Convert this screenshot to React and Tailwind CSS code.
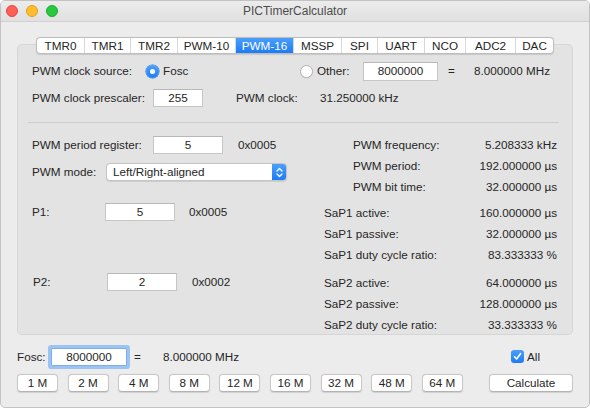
import { useState } from 'react'

const tabs = [
  ['TMR0', 'w-[47px]'],
  ['TMR1', 'w-[46px]'],
  ['TMR2', 'w-[47px]'],
  ['PWM-10', 'w-[58px]'],
  ['PWM-16', 'w-[58px]'],
  ['MSSP', 'w-[48px]'],
  ['SPI', 'w-[36px]'],
  ['UART', 'w-[47px]'],
  ['NCO', 'w-[41px]'],
  ['ADC2', 'w-[50px]'],
  ['DAC', 'w-[38px]'],
]

const presets = ['1 M', '2 M', '4 M', '8 M', '12 M', '16 M', '32 M', '48 M', '64 M']

function Field({ value, className }) {
  return (
    <div
      className={`flex h-[18px] items-center justify-center border border-[#c6c6c6] border-t-[#b8b8b8] bg-white ${className}`}
    >
      {value}
    </div>
  )
}

function Radio({ checked }) {
  return checked ? (
    <span className="flex h-[13px] w-[13px] items-center justify-center rounded-full bg-linear-to-b from-[#4aa1fb] to-[#1d7ff5] shadow-[0_0_0_0.5px_#1b6fd8]">
      <span className="h-[5px] w-[5px] rounded-full bg-white" />
    </span>
  ) : (
    <span className="h-[13px] w-[13px] rounded-full border border-[#b4b4b4] bg-white shadow-[0_0.5px_1px_rgba(0,0,0,0.1)]" />
  )
}

function Stat({ label, value, indent }) {
  return (
    <div className="flex h-[20px] items-center">
      <span className={indent ? 'pl-[29px]' : ''}>{label}</span>
      <span className="ml-auto">{value}</span>
    </div>
  )
}

function Btn({ children, className }) {
  return (
    <button className={`flex h-[18px] items-center justify-center rounded-[4px] border border-[#c8c8c8] border-b-[#b3b3b3] bg-white shadow-[0_0.5px_1px_rgba(0,0,0,0.12)] ${className}`}>
      {children}
    </button>
  )
}

export default function App() {
  const [tab, setTab] = useState('PWM-16')
  const [all, setAll] = useState(true)

  return (
    <div className="h-[408px] w-[590px] bg-white font-['Liberation_Sans',Arial,sans-serif] text-[11.7px] text-[#262626]">
      <div className="flex h-full flex-col overflow-hidden rounded-[5px] border border-[#c2c2c2] bg-[#ececec]">
        {/* title bar */}
        <div className="relative flex h-[21px] shrink-0 items-center justify-center border-b border-[#d0d0d0] bg-linear-to-b from-[#ececec] to-[#e0e0e0]">
          <div className="absolute left-[5px] top-[4px] flex gap-[8px]">
            <span className="h-[12px] w-[12px] rounded-full border border-[#e2463f] bg-[#fe5f57]" />
            <span className="h-[12px] w-[12px] rounded-full border border-[#e1a116] bg-[#febc2e]" />
            <span className="h-[12px] w-[12px] rounded-full border border-[#1aab29] bg-[#28c840]" />
          </div>
          <span className="text-[12px] text-[#4d4d4d]">PICTimerCalculator</span>
        </div>

        {/* tabs */}
        <div className="relative z-10 flex justify-center pt-[15px]">
          <div className="flex h-[17px] overflow-hidden rounded-[4px] border border-[#bdbdbd] bg-white shadow-[0_0.5px_1px_rgba(0,0,0,0.12)]">
            {tabs.map(([name, w], i) => (
              <button
                key={name}
                onClick={() => setTab(name)}
                className={`flex h-full items-center justify-center ${w} ${i > 0 ? 'border-l border-[#d8d8d8]' : ''} ${
                  tab === name ? 'bg-linear-to-b from-[#4b9ffa] to-[#1a7cf5] text-white' : ''
                }`}
              >
                {name}
              </button>
            ))}
          </div>
        </div>

        {/* group box */}
        <div className="mx-[16px] -mt-[10px] h-[291px] shrink-0 rounded-[5px] border border-[#d6d6d6] bg-[#e3e3e3] pt-[15px]">
          <div className="flex h-[22px] items-center pl-[14px]">
            <span className="w-[114px]">PWM clock source:</span>
            <Radio checked />
            <span className="ml-[4px] w-[137px]">Fosc</span>
            <Radio />
            <span className="ml-[4px] w-[46px]">Other:</span>
            <Field value="8000000" className="h-[19px] w-[75px]" />
            <span className="w-[36px] pl-[10px]">=</span>
            <span>8.000000 MHz</span>
          </div>

          <div className="mt-[5px] flex h-[22px] items-center pl-[14px]">
            <span className="w-[121px]">PWM clock prescaler:</span>
            <Field value="255" className="w-[50px]" />
            <span className="ml-[33px] w-[84px]">PWM clock:</span>
            <span>31.250000 kHz</span>
          </div>

          <div className="ml-[10px] mr-[13px] mt-[13px] h-px bg-[#cdcdcd]" />

          <div className="flex">
            <div className="w-[306px] pl-[14px]">
              <div className="mt-[12px] flex h-[20px] items-center">
                <span className="w-[121px]">PWM period register:</span>
                <Field value="5" className="w-[70px]" />
                <span className="ml-[15px]">0x0005</span>
              </div>
              <div className="mt-[7px] flex h-[20px] items-center">
                <span className="w-[74px]">PWM mode:</span>
                <div className="flex h-[18px] w-[181px] items-center overflow-hidden rounded-[4px] border border-[#c4c4c4] bg-white shadow-[0_0.5px_1px_rgba(0,0,0,0.1)]">
                  <span className="flex-1 pl-[6px]">Left/Right-aligned</span>
                  <span className="flex h-full w-[14px] items-center justify-center bg-linear-to-b from-[#4b9ffa] to-[#1a7cf5]">
                    <svg width="7" height="11" viewBox="0 0 7 11" fill="none" stroke="white" strokeWidth="1.3" strokeLinecap="round" strokeLinejoin="round">
                      <path d="M1 4 L3.5 1.5 L6 4" />
                      <path d="M1 7 L3.5 9.5 L6 7" />
                    </svg>
                  </span>
                </div>
              </div>
              <div className="mt-[20px] flex h-[20px] items-center">
                <span className="w-[73px]">P1:</span>
                <Field value="5" className="w-[70px]" />
                <span className="ml-[14px]">0x0005</span>
              </div>
              <div className="mt-[50px] flex h-[20px] items-center pl-[1px]">
                <span className="w-[74px]">P2:</span>
                <Field value="2" className="w-[70px]" />
                <span className="ml-[15px]">0x0002</span>
              </div>
            </div>

            <div className="w-[233px]">
              <div className="mt-[12px] flex flex-col gap-[1px]">
                <Stat indent label="PWM frequency:" value="5.208333 kHz" />
                <Stat indent label="PWM period:" value="192.000000 µs" />
                <Stat indent label="PWM bit time:" value="32.000000 µs" />
              </div>
              <div className="mt-[6px] flex flex-col gap-[1px]">
                <Stat label="SaP1 active:" value="160.000000 µs" />
                <Stat label="SaP1 passive:" value="32.000000 µs" />
                <Stat label="SaP1 duty cycle ratio:" value="83.333333 %" />
              </div>
              <div className="mt-[8px] flex flex-col gap-[1px]">
                <Stat label="SaP2 active:" value="64.000000 µs" />
                <Stat label="SaP2 passive:" value="128.000000 µs" />
                <Stat label="SaP2 duty cycle ratio:" value="33.333333 %" />
              </div>
            </div>
          </div>
        </div>

        {/* bottom controls */}
        <div className="mt-[11px] flex h-[21px] items-center pl-[16px]">
          <span className="w-[34px]">Fosc:</span>
          <div className="flex h-[18px] w-[76px] items-center justify-center rounded-[1px] border border-[#7eaeea] bg-white ring-[3px] ring-[#9cc4f3]">
            8000000
          </div>
          <span className="w-[36px] pl-[7px]">=</span>
          <span className="w-[348px]">8.000000 MHz</span>
          <button onClick={() => setAll(!all)} className="flex items-center">
            <span className={`flex h-[13px] w-[13px] items-center justify-center rounded-[3px] ${all ? 'bg-linear-to-b from-[#4b9ffa] to-[#1a7cf5]' : 'border border-[#b4b4b4] bg-white'}`}>
              {all && (
                <svg width="9" height="9" viewBox="0 0 9 9" fill="none" stroke="white" strokeWidth="1.6" strokeLinecap="round" strokeLinejoin="round">
                  <path d="M1.5 4.8 L3.6 7 L7.6 1.6" />
                </svg>
              )}
            </span>
            <span className="ml-[3px]">All</span>
          </button>
        </div>

        <div className="mt-[7px] flex items-center gap-[9.6px] pl-[16px] pr-[16px]">
          {presets.map((p) => (
            <Btn key={p} className="w-[41px]">{p}</Btn>
          ))}
          <Btn className="ml-auto w-[84px]">Calculate</Btn>
        </div>
      </div>
    </div>
  )
}
